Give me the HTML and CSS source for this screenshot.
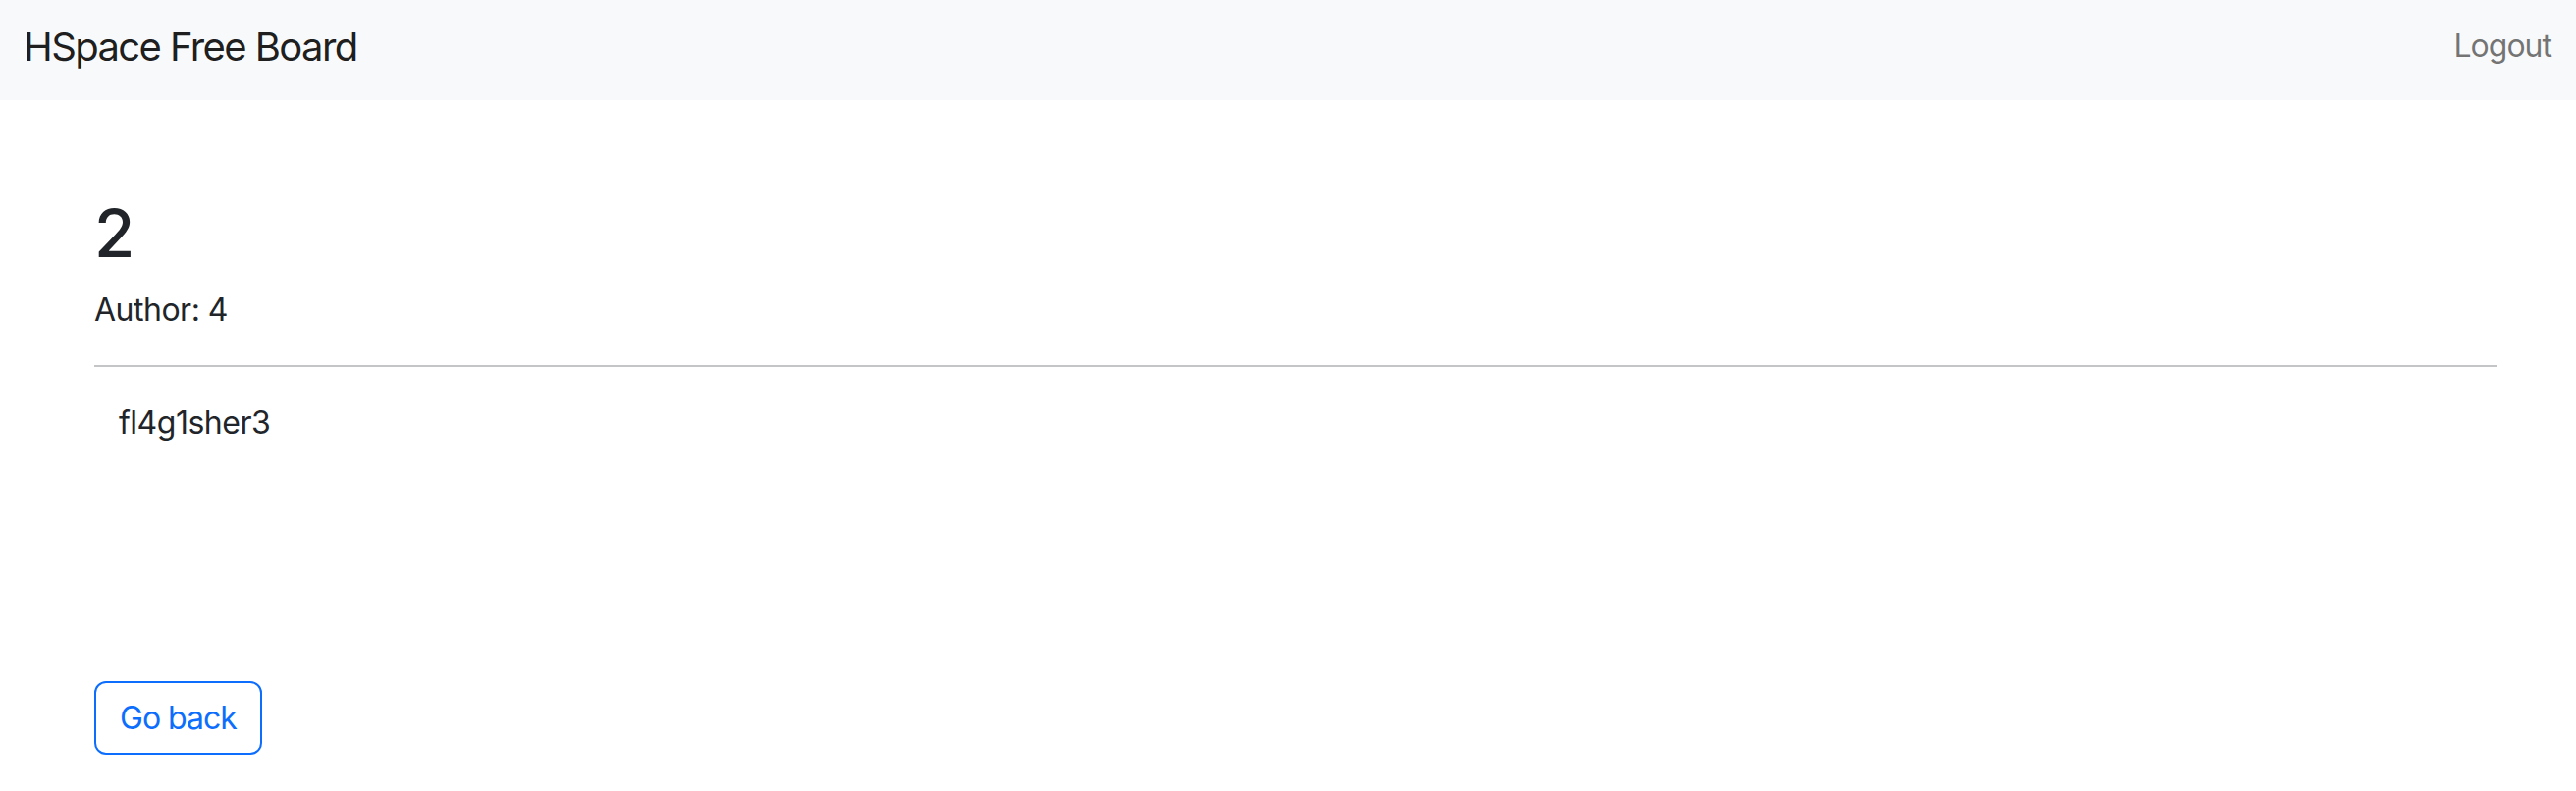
FILE: index.html
```html
<!DOCTYPE html>
<html lang="en">
<head>
<meta charset="utf-8">
<title>HSpace Free Board</title>
<link rel="stylesheet" href="styles.css">
</head>
<body>
<nav class="navbar">
  <a class="brand" href="#">HSpace Free Board</a>
  <a class="nav-link" href="#">Logout</a>
</nav>
<main class="container">
  <h2 class="post-title">2</h2>
  <p class="author">Author: 4</p>
  <hr class="divider">
  <div class="post-body">fl4g1sher3</div>
  <a class="btn-outline" href="#">Go back</a>
</main>
</body>
</html>
```

FILE: styles.css
```css
* { box-sizing: border-box; }
html, body { margin: 0; padding: 0; }
body {
  font-family: Inter, "Noto Sans", "Liberation Sans", sans-serif;
  color: #212529;
  background: #ffffff;
  width: 2624px;
}
a { text-decoration: none; }

.navbar {
  height: 102px;
  background: #f8f9fa;
  display: flex;
  align-items: center;
  justify-content: space-between;
  padding: 0 25px 0 24px;
}
.brand {
  font-size: 40px;
  line-height: 60px;
  letter-spacing: -1.6px;
  color: rgba(0, 0, 0, 0.9);
  margin-top: -6px;
}
.nav-link {
  font-size: 32px;
  line-height: 48px;
  letter-spacing: -1px;
  color: rgba(0, 0, 0, 0.55);
  margin-top: -8px;
}

.container {
  padding: 0 80px 0 96px;
}
.post-title {
  margin: 96px 0 0 0;
  font-size: 67px;
  line-height: 80px;
  font-weight: 500;
  letter-spacing: -2px;
}
.author {
  margin: 14px 0 0 0;
  font-size: 32px;
  line-height: 48px;
  letter-spacing: -0.5px;
}
.divider {
  margin: 32px 0 0 0;
  border: 0;
  border-top: 2px solid #c4c5c6;
  height: 0;
}
.post-body {
  margin-top: 33px;
  padding-left: 25px;
  font-size: 32px;
  line-height: 48px;
  letter-spacing: -0.5px;
  min-height: 287px;
}
.btn-outline {
  display: inline-block;
  font-size: 32px;
  line-height: 47px;
  letter-spacing: -1px;
  padding: 12px 24px;
  border: 2px solid #0d6efd;
  border-radius: 12px;
  color: #0d6efd;
}
```
